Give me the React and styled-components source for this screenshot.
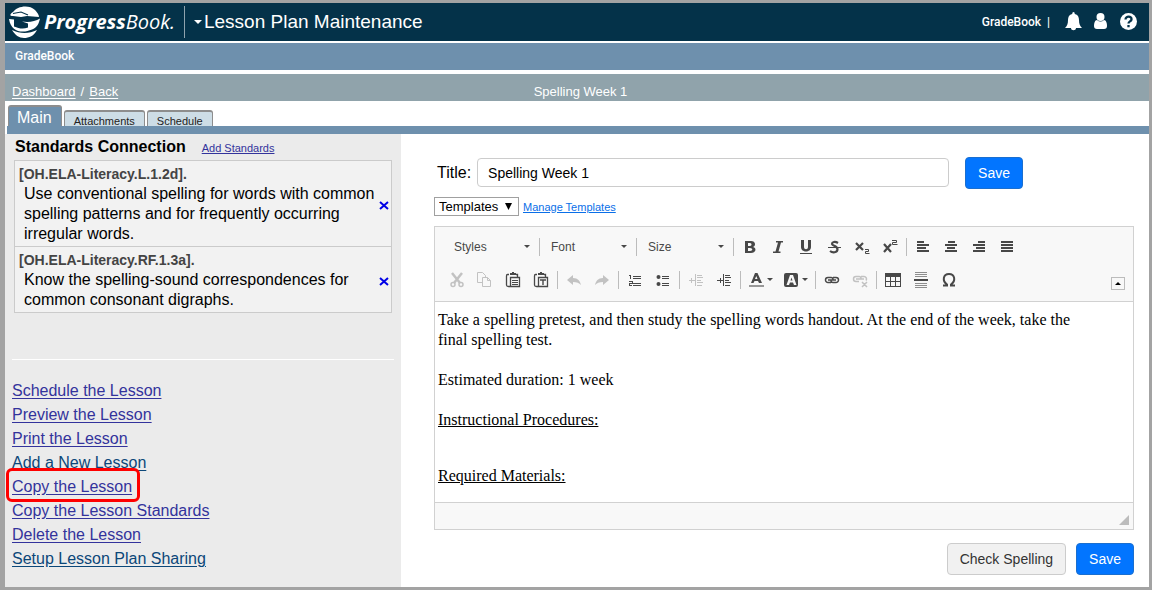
import React from 'react';
import styled, { createGlobalStyle } from 'styled-components';

const GlobalStyle = createGlobalStyle`
	* { box-sizing: border-box; }
	body {
		margin: 0;
		background: #fff;
		color: #000;
		font-family: "Liberation Sans", Arial, sans-serif;
		font-size: 16px;
	}
	button, input, select { font-family: inherit; margin: 0; }
`

const Page = styled.div`
	min-height: 100vh;
	display: flex;
	flex-direction: column;
	border: 3px solid #a3a3a3;
	border-left-width: 5px;
`

const Header = styled.header`
	display: flex;
	align-items: center;
	height: 38px;
	padding: 0 12px 0 4px;
	background: #043249;
	color: #fff;
`

const Brand = styled.a`
	display: flex;
	align-items: center;
	gap: 4px;
	height: 32px;
	padding-right: 9px;
	border-right: 1px solid #8fa3ae;
	color: #fff;
	font: italic 400 20px/30px "Open Sans", sans-serif;
	text-decoration: none;
	b { font-weight: 700; }
`

const PageMenu = styled.button`
	display: flex;
	align-items: center;
	gap: 2px;
	flex: 1;
	padding: 0 0 0 9px;
	border: 0;
	background: none;
	color: #fff;
	font-size: 19px;
	text-align: left;
`

const HeaderTools = styled.div`
	display: flex;
	align-items: center;
	font: 500 12px/16px Roboto, sans-serif;
`

const IconButton = styled.button`
	display: flex;
	padding: 0 0 2px;
	margin-left: ${p => p.$gap || 12}px;
	border: 0;
	background: none;
	color: #fff;
`

const Nav = styled.nav`
	height: 27px;
	margin: 2px 0 4px;
	padding: 0 10px;
	background: #6e90ad;
	font: 500 12px/26px Roboto, sans-serif;
	a { color: #fff; text-decoration: none; }
`

const CrumbBar = styled.div`
	display: grid;
	grid-template-columns: 1fr auto 1fr;
	height: 27px;
	padding: 4px 0 0 7px;
	background: #90a3ab;
	color: #fff;
	font-size: 13px;
	line-height: 27px;
	a { color: #fff; text-underline-offset: 2px; }
	i { margin: 0 5px; font-style: normal; }
`

const Tabs = styled.div`
	display: flex;
	align-items: flex-end;
	gap: 2px;
	height: 33px;
	margin-left: 2px;
	padding-left: 1px;
	border-bottom: 8px solid #6e90ad;
`

const Tab = styled.button`
	height: ${p => p.$active ? 21 : 16}px;
	padding: ${p => p.$active ? '2px 9px 0 8px' : '3px 9px 0'};
	border: 1px solid #8d8d8d;
	border-top-width: 2px;
	border-bottom: 0;
	border-radius: 3px 3px 0 0;
	background: ${p => p.$active ? '#6e90ad' : '#cddde6'};
	color: ${p => p.$active ? '#fff' : '#222'};
	font-size: ${p => p.$active ? 16 : 11}px;
	line-height: ${p => p.$active ? 18 : 12}px;
`

const Body = styled.div`
	flex: 1;
	display: grid;
	grid-template-columns: 396px 1fr;
`

const Sidebar = styled.aside`
	padding: 3px 7px 11px;
	background: #ebebeb;
`

const SideHead = styled.div`
	display: flex;
	align-items: baseline;
	gap: 16px;
	padding: 0 3px;
	h2 { margin: 0; font-size: 16px; line-height: 20px; }
	a { color: #33339c; font-size: 11px; }
`

const Standards = styled.ul`
	margin: 3px 2px 46px;
	padding: 0;
	border: 1px solid #cbcbcb;
	background: #f2f2f2;
	list-style: none;
`

const Standard = styled.li`
	display: flex;
	align-items: center;
	padding: 4px 2px 2px 4px;
	& + & { border-top: 1px solid #cbcbcb; }
	div { flex: 1; }
	h3 { margin: 0; color: #444; font-size: 14px; line-height: 19px; }
	p { margin: 0 0 0 5px; line-height: 20px; }
`

const Remove = styled.button`
	display: flex;
	padding: 2px 0 0;
	border: 0;
	background: none;
	color: #0000e6;
`

const Actions = styled.ul`
	margin: 0;
	padding: 19px 0 0;
	border-top: 1px solid #fff;
	list-style: none;
	line-height: 24px;
`

const Action = styled.li`
	a {
		position: relative;
		color: ${p => p.$fresh ? '#0b4779' : '#33339c'};
		text-underline-offset: 2px;
	}
`

const Highlight = styled.span`
	position: absolute;
	inset: -10px -8px -7px -6px;
	border: 3px solid #f00;
	border-radius: 6px;
`

const Main = styled.main`
	padding: 23px 15px 12px 33px;
`

const TitleRow = styled.div`
	display: flex;
	align-items: center;
	padding: 0 111px 0 3px;
	input {
		flex: 1;
		min-width: 0;
		height: 29px;
		margin: 0 16px 1px 6px;
		padding: 1px 10px 0;
		border: 1px solid #ccc;
		border-radius: 4px;
		font-size: 14px;
	}
`

const Button = styled.button`
	height: 32px;
	padding: 0 12px;
	border: 1px solid ${p => p.$primary ? '#1a6fd0' : '#ccc'};
	border-radius: 4px;
	background: ${p => p.$primary ? '#0275ff' : '#f1f1f1'};
	color: ${p => p.$primary ? '#fff' : '#333'};
	font-size: 14px;
`

const TemplateRow = styled.div`
	display: flex;
	align-items: center;
	gap: 4px;
	margin: 8px 0 10px;
	a { color: #0a6fe8; font-size: 11px; }
`

const SelectBox = styled.span`
	position: relative;
	display: flex;
	select {
		appearance: none;
		width: 85px;
		height: 19px;
		padding: 0 4px;
		border: 1px solid #a0a0a0;
		border-radius: 0;
		background: #fff;
		font-size: 13px;
		line-height: 16px;
	}
	svg {
		position: absolute;
		top: 6px;
		right: 7px;
		pointer-events: none;
	}
`

const Editor = styled.section`
	border: 1px solid #d1d1d1;
`

const Toolbar = styled.div`
	display: flex;
	align-items: flex-end;
	justify-content: space-between;
	padding: 3px 8px 5px;
	border-bottom: 1px solid #d1d1d1;
	background: #f8f8f8;
`

const ToolRow = styled.div`
	display: flex;
	align-items: center;
	height: 33px;
	padding-left: ${p => p.$inset || 0}px;
`

const Tool = styled.button`
	display: flex;
	align-items: center;
	justify-content: center;
	gap: 3px;
	width: ${p => p.$wide ? 35 : 28}px;
	height: 26px;
	padding: 0;
	border: 0;
	background: none;
	color: #484848;
	opacity: ${p => p.disabled ? 0.3 : 1};
`

const Combo = styled.button`
	display: flex;
	align-items: center;
	justify-content: space-between;
	width: 92px;
	height: 26px;
	padding: 0 7px 0 9px;
	border: 0;
	background: none;
	color: #484848;
	font-size: 12px;
`

const Separator = styled.span`
	width: 1px;
	height: 18px;
	margin: 0 2px;
	background: #bcbcbc;
`

const Collapse = styled.button`
	display: flex;
	align-items: center;
	justify-content: center;
	width: 14px;
	height: 13px;
	margin-bottom: 6px;
	padding: 0;
	border: 1px solid #bcbcbc;
	background: #f8f8f8;
`

const Content = styled.div`
	min-height: 200px;
	padding: 8px 48px 0 3px;
	font: 16px/20px "Liberation Serif", "Times New Roman", serif;
	p { margin: 0 0 20px; }
	p:last-child { margin-top: 36px; }
`

const EditorFoot = styled.div`
	display: flex;
	align-items: flex-end;
	justify-content: flex-end;
	height: 27px;
	padding: 0 4px 4px;
	border-top: 1px solid #d1d1d1;
	background: #f8f8f8;
`

const Footer = styled.div`
	display: flex;
	justify-content: flex-end;
	gap: 10px;
	margin-top: 13px;
`

const Icon = ({w = 16, h = 16, children, ...rest}) => (
	<svg width={w} height={h} viewBox={`0 0 ${w} ${h}`} fill="currentColor" aria-hidden="true" {...rest}>{children}</svg>
)

const Lines = ({d, ...rest}) => (
	<Icon {...rest}><path d={d} fill="none" stroke="currentColor" shapeRendering="crispEdges"/></Icon>
)

const Arrow = () => <Icon w={6} h={3}><path d="M0 0h6L3 3z"/></Icon>

const Logo = () => (
	<Icon w={31} h={32}>
		<path d="M4 6C8 0 20-2 26 4c2 2 4 5 4 7l-12-1-6 1-8-1C0 10 1 8 4 6z"/>
		<path d="M4 7.500l8-1.500 7 3" fill="none" stroke="#043249" strokeWidth="1.200"/>
		<path d="M0 13l5 .5v7c5 2 9 3 14 1v-4l-6-2c7 1 13 0 18-3-1 5-3 9-8 11-9 4-21 3-23-10.500z"/>
		<path d="M3 24c8 4 17 4 25 0-3 6-8 8-13 8S6 29 3 24z"/>
	</Icon>
)

const rowOne = [
	['Bold', <Icon><path d="M3 2h6c5 0 5 5 2 6 4 1 3 6-2 6H3zm3 2v3h2c2 0 2-3 0-3zm0 5v3h2c3 0 3-3 0-3z" fillRule="evenodd"/></Icon>],
	['Italic', <Icon><path d="M6 2h7v1.500h-2L8.500 12.500h2V14H3v-1.500h2.500L8 3.500H6z"/></Icon>],
	['Underline', <Icon><path d="M3 1h3v7c0 3 4 3 4 0V1h3v7c0 6-10 6-10 0zM2 14h12v1H2z"/></Icon>],
	['Strikethrough', <Icon><path d="M12 4C9 2 6 3 6 5c.5 2 5 1.500 5.500 5 0 4-5 4-7.500 2" fill="none" stroke="currentColor" strokeWidth="2.200"/><path d="M2 8h13v1H2z"/></Icon>],
	['Subscript', <Icon><path d="M2 4l7 7M9 4l-7 7" stroke="currentColor" strokeWidth="2.200"/><path d="M11 10.500h3.500v2h-3v2h4" fill="none" stroke="currentColor"/></Icon>],
	['Superscript', <Icon><path d="M2 5l7 8M9 5l-7 8" stroke="currentColor" strokeWidth="2.200"/><path d="M10 1.500h4.500v2h-4v2h5" fill="none" stroke="currentColor"/></Icon>],
]

const aligns = [
	['Align left', 'M2 3h7M2 6h12M2 9h9M2 12h12'],
	['Center', 'M5 3h7M2 6h12M4 9h8M2 12h12'],
	['Align right', 'M7 3h7M2 6h12M5 9h9M2 12h12'],
	['Justify', 'M2 3h12M2 6h12M2 9h12M2 12h12'],
]

const Clipboard = ({children}) => (
	<Icon>
		<path d="M4 2.500H2.500Q1.500 2.500 1.500 4v9q0 1.500 2 1.500H5M11 2.500h1.500V5" fill="none" stroke="currentColor" strokeWidth="1.300"/>
		<path d="M5 1h2V0h2v1h2v2H5z"/>
		<path d="M5.500 5.500h9v9h-9z" fill="none" stroke="currentColor" strokeWidth="1.300"/>
		{children}
	</Icon>
)

const rowTwo = [
	['Cut', <Icon><path d="M3 1l8 10M13 1L5 11" stroke="currentColor" strokeWidth="2.500"/><circle cx="4" cy="12.500" r="2" fill="none" stroke="currentColor" strokeWidth="1.500"/><circle cx="12" cy="12.500" r="2" fill="none" stroke="currentColor" strokeWidth="1.500"/></Icon>, true],
	['Copy', <Icon><path d="M5 10.500H.5v-10h5l3 3V5M5.500 5.500h5l3 3v6h-8zM10.500 5.500v3h3" fill="none" stroke="currentColor"/></Icon>, true],
	['Paste', <Clipboard><path d="M7 8.500h6M7 10.500h6M7 12.500h6" stroke="currentColor"/></Clipboard>],
	['Paste as plain text', <Clipboard><path d="M7 8h6M10 8v5" stroke="currentColor" strokeWidth="1.400"/></Clipboard>],
	null,
	['Undo', <Icon><path d="M1 8l6-5v3c5 0 7 3 8 7-2-2-4-3-8-3v3z"/></Icon>, true],
	['Redo', <Icon><path d="M15 8L9 3v3c-5 0-7 3-8 7 2-2 4-3 8-3v3z"/></Icon>, true],
	null,
	['Numbered list', <Lines d="M2 3.500h2M3.500 3v4M2 9.500h3v2H2.500v2H5M6 4.500h8M6 6.500h8M6 11.500h8M6 13.500h8"/>],
	['Bulleted list', <Icon><circle cx="3.500" cy="5" r="2"/><circle cx="3.500" cy="12" r="2"/><path d="M7 4.500h7M7 6.500h7M7 11.500h7M7 13.500h7" stroke="currentColor"/></Icon>],
	null,
	['Decrease indent', <Lines d="M1 8.500h7M3.500 6v5M7.500 2v12M9 3.500h5M9 5.500h6M9 8.500h4M9 10.500h6M9 13.500h5"/>, true],
	['Increase indent', <Lines d="M1 8.500h6M4.500 6v5M7.500 2v12M9 3.500h5M9 5.500h6M9 8.500h4M9 10.500h6M9 13.500h5"/>],
	null,
	['Text color', <><Icon><path d="M7 1h2.500L14 11h-3l-1-2H6.500l-1 2H3zM7 7h2.500L8.300 4z" fillRule="evenodd"/><path d="M1 13h15v2H1z" opacity=".55"/></Icon><Arrow/></>, false, true],
	['Background color', <><Icon><path d="M3 1h10q2 0 2 2v10q0 2-2 2H3q-2 0-2-2V3q0-2 2-2zm4 2L3.500 13H6l1-2.500h3l1 2.500h2.500L10 3zm1.500 2.500l1 3h-2z" fillRule="evenodd"/></Icon><Arrow/></>, false, true],
	null,
	['Link', <Icon><path d="M7 10.500H4a2.500 2.500 0 010-5h3q2 0 2 2M9 5.500h3a2.500 2.500 0 010 5H9q-2 0-2-2M4 8h8" fill="none" stroke="currentColor" strokeWidth="1.500"/></Icon>],
	['Unlink', <Icon><path d="M7 9.500H4a2.500 2.500 0 010-5h3q2 0 2 2M9 4.500h3a2.500 2.500 0 012 4M4 7h8M10 10l5 5M15 10l-5 5" fill="none" stroke="currentColor" strokeWidth="1.500"/></Icon>, true],
	null,
	['Table', <Icon><path d="M0 1h16v14H0zM1 5v4h4V5zm5 0v4h4V5zm5 0v4h4V5zM1 10v4h4v-4zm5 0v4h4v-4zm5 0v4h4v-4z" fillRule="evenodd"/></Icon>],
	['Horizontal line', <Icon><path d="M2 .5h12M2 2.500h12M2 4.500h12M2 11.500h12M2 13.500h12M2 15.500h12" stroke="currentColor" opacity=".6"/><path d="M1 7h14v2H1z"/></Icon>],
	['Special character', <Icon><path d="M2 13.500h4v-1C1 9 2 2 8 2s7 7 2 10.500v1h4" fill="none" stroke="currentColor" strokeWidth="2"/></Icon>],
]

const standards = [
	['[OH.ELA-Literacy.L.1.2d].', 'Use conventional spelling for words with common spelling patterns and for frequently occurring irregular words.'],
	['[OH.ELA-Literacy.RF.1.3a].', 'Know the spelling-sound correspondences for common consonant digraphs.'],
]

const actions = [
	['Schedule the Lesson'],
	['Preview the Lesson'],
	['Print the Lesson'],
	['Add a New Lesson', true],
	['Copy the Lesson', false, true],
	['Copy the Lesson Standards'],
	['Delete the Lesson'],
	['Setup Lesson Plan Sharing', true],
]

const App = () => {

	return (
		<Page>
			<GlobalStyle/>
			<Header>
				<Brand href="#"><Logo/><span><b>Progress</b>Book.</span></Brand>
				<PageMenu><Icon w={8} h={4}><path d="M0 0h8L4 4z"/></Icon>Lesson Plan Maintenance</PageMenu>
				<HeaderTools>
					<span>GradeBook&nbsp; |</span>
					<IconButton $gap={15} aria-label="Notifications">
						<Icon w={17} h={19}><path d="M8.500 0q1.300 0 1.300 2c3 .6 4.200 3 4.200 6 0 4 1 6 3 8h-6c0 3-5 3-5 0H0c2-2 3-4 3-8 0-3 1.200-5.400 4.200-6Q7.200 0 8.500 0z"/></Icon>
					</IconButton>
					<IconButton aria-label="Account">
						<Icon w={13} h={16}><circle cx="6.500" cy="4" r="4"/><path d="M3 7q3.500 3 7 0c2 0 3 3 3 6q0 3-3 3H3q-3 0-3-3c0-3 1-6 3-6z"/></Icon>
					</IconButton>
					<IconButton $gap={13} aria-label="Help">
						<Icon w={17} h={17}><circle cx="8.500" cy="8.500" r="8.500"/><path d="M5.500 6.500c0-4 6.500-3.500 6 0-.3 2-3 1.800-3 4M8.500 12v2.300" fill="none" stroke="#043249" strokeWidth="2.300"/></Icon>
					</IconButton>
				</HeaderTools>
			</Header>
			<Nav><a href="#">GradeBook</a></Nav>
			<CrumbBar>
				<span><a href="#">Dashboard</a><i>/</i><a href="#">Back</a></span>
				<span>Spelling Week 1</span>
			</CrumbBar>
			<Tabs>
				<Tab $active>Main</Tab>
				<Tab>Attachments</Tab>
				<Tab>Schedule</Tab>
			</Tabs>
			<Body>
				<Sidebar>
					<SideHead><h2>Standards Connection</h2><a href="#">Add Standards</a></SideHead>
					<Standards>
						{standards.map(([code, text]) => (
							<Standard key={code}>
								<div><h3>{code}</h3><p>{text}</p></div>
								<Remove aria-label="Remove">
									<Icon w={10} h={9}><path d="M1 1l8 7M9 1L1 8" stroke="currentColor" strokeWidth="2"/></Icon>
								</Remove>
							</Standard>
						))}
					</Standards>
					<Actions>
						{actions.map(([text, fresh, marked]) => (
							<Action key={text} $fresh={fresh}>
								<a href="#">{text}{marked && <Highlight/>}</a>
							</Action>
						))}
					</Actions>
				</Sidebar>
				<Main>
					<TitleRow>
						<label htmlFor="title">Title:</label>
						<input id="title" defaultValue="Spelling Week 1"/>
						<Button $primary>Save</Button>
					</TitleRow>
					<TemplateRow>
						<SelectBox>
							<select aria-label="Templates"><option>Templates</option></select>
							<Icon w={7} h={7}><path d="M0 0h7L3.500 7z"/></Icon>
						</SelectBox>
						<a href="#">Manage Templates</a>
					</TemplateRow>
					<Editor>
						<Toolbar>
							<div>
								<ToolRow $inset={2}>
									{['Styles', 'Font', 'Size'].map(name => (
										<React.Fragment key={name}><Combo>{name}<Arrow/></Combo><Separator/></React.Fragment>
									))}
									{rowOne.map(([name, icon]) => <Tool key={name} aria-label={name}>{icon}</Tool>)}
									<Separator/>
									{aligns.map(([name, d]) => (
										<Tool key={name} aria-label={name}><Icon><path d={d} stroke="currentColor" strokeWidth="2"/></Icon></Tool>
									))}
								</ToolRow>
								<ToolRow>
									{rowTwo.map((tool, i) => tool
										? <Tool key={i} aria-label={tool[0]} disabled={tool[2]} $wide={tool[3]}>{tool[1]}</Tool>
										: <Separator key={i}/>
									)}
								</ToolRow>
							</div>
							<Collapse aria-label="Collapse toolbar"><Icon w={6} h={3}><path d="M0 3h6L3 0z"/></Icon></Collapse>
						</Toolbar>
						<Content>
							<p>Take a spelling pretest, and then study the spelling words handout. At the end of the week, take the final spelling test.</p>
							<p>Estimated duration: 1 week</p>
							<p><u>Instructional Procedures:</u></p>
							<p><u>Required Materials:</u></p>
						</Content>
						<EditorFoot><Icon w={10} h={10} color="#bcbcbc"><path d="M10 0v10H0z"/></Icon></EditorFoot>
					</Editor>
					<Footer>
						<Button>Check Spelling</Button>
						<Button $primary>Save</Button>
					</Footer>
				</Main>
			</Body>
		</Page>
	);
}

export default App
